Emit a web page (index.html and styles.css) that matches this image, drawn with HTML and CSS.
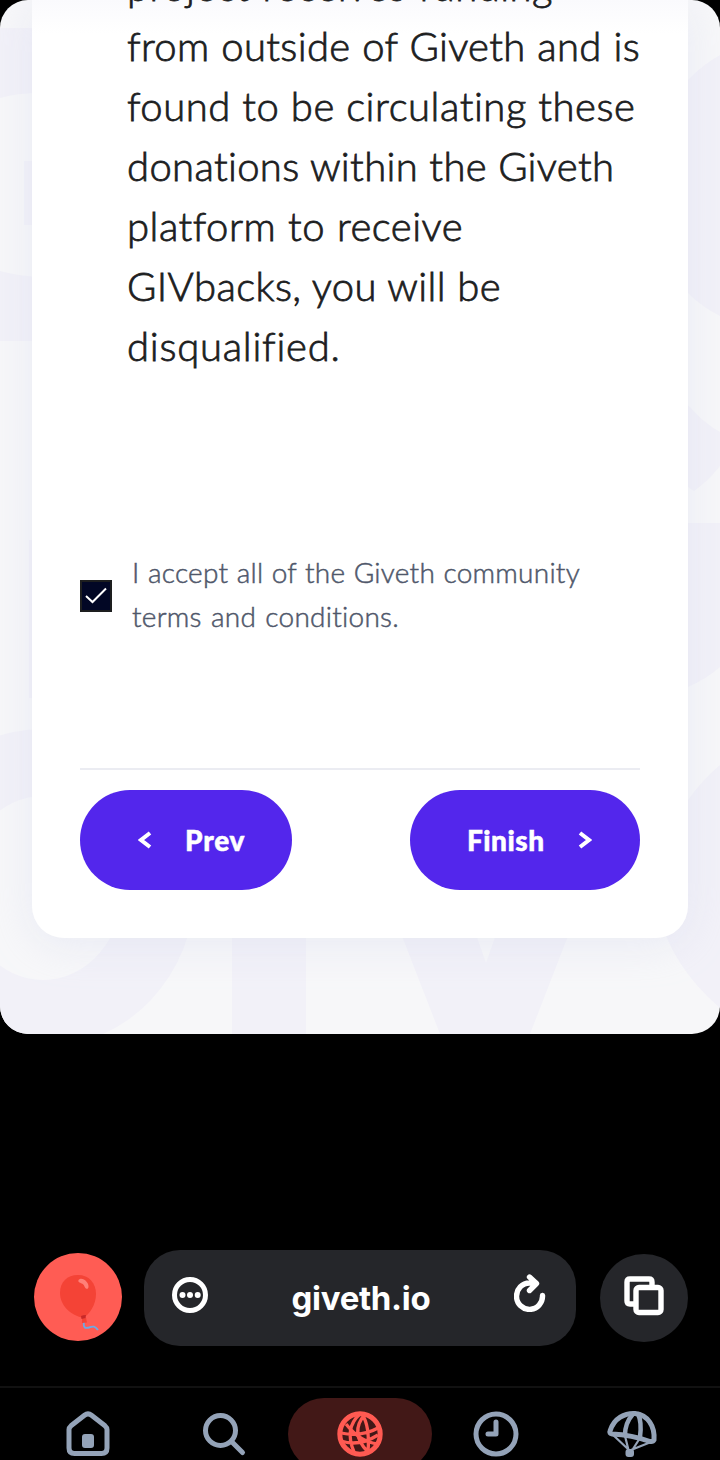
FILE: index.html
```html
<!DOCTYPE html>
<html lang="en">
<head>
<meta charset="utf-8">
<meta name="viewport" content="width=device-width">
<title>Giveth</title>
<link rel="stylesheet" href="styles.css">
</head>
<body>
<main class="page">
  <svg class="backdrop" viewBox="0 0 720 1034" aria-hidden="true">
    <path d="M0 28h40v65Q18 93 0 98zM24 161h16v64H24zM0 271q18 5 40 6v64H0zM29 540h10v158H29z"/>
    <path fill-rule="evenodd" d="M-109 888a152 159 0 0 1 304 0a152 159 0 0 1-304 0zM-37 888a80 92 0 0 0 160 0a80 92 0 0 0-160 0z"/>
    <path d="M232 900h74v134h-74zM388 900l52 134h90l52-134h-74l-22 63-22-63z"/>
    <path d="M720 55Q702 65 688 80h-20v213h20q14 14 32 23zM688 405q14 17 32 27v34q-12 15-26 25l-6-4zM688 523h32v144q-14 12-32 20zM720 765q-18 15-32 35l-30 110q12 55 62 98z"/>
  </svg>
  <section class="card">
    <div class="terms">
      <span class="line t0">project receives funding</span>
      <span class="line t1">from outside of Giveth and is</span>
      <span class="line t2">found to be circulating these</span>
      <span class="line t3">donations within the Giveth</span>
      <span class="line t4">platform to receive</span>
      <span class="line t5">GIVbacks, you will be</span>
      <span class="line t6">disqualified.</span>
    </div>
    <label class="accept">
      <span class="box"><svg width="28" height="28" viewBox="0 0 28 28"><path d="M4 14l6.500 6L24 6.500" fill="none" stroke="#fff" stroke-width="2"/></svg></span>
      <span class="accept-text">
        <span class="line a1">I accept all of the Giveth community</span>
        <span class="line a2">terms and conditions.</span>
      </span>
    </label>
    <div class="actions">
      <button class="btn prev"><svg width="14" height="18" viewBox="0 0 14 18"><path d="M12 2L3 9l9 7"/></svg><span class="prev-label">Prev</span></button>
      <button class="btn finish"><span class="finish-label">Finish</span><svg width="14" height="18" viewBox="0 0 14 18"><path d="M2 2l9 7-9 7"/></svg></button>
    </div>
  </section>
</main>
<div class="toolbar">
  <div class="avatar">
    <svg width="88" height="88" viewBox="0 0 88 88">
      <path d="M50 68c-1 7 1 7.500 5 6.500c4-1.500 6-1.500 9 2.500" fill="none" stroke="#6fa8e4" stroke-width="1.900"/>
      <path d="M44 22c11 0 18 8 18 19c0 11-7 21-13 24C36 62 26 52 26 40c0-11 7-18 18-18z" fill="#f44336"/>
      <path d="M48 65l4-.5 1 5-5 .5z" fill="#f44336"/><path d="M47 63q2-1 5-1l-.5 3-4 1z" fill="#c62828"/>
      <path d="M46 26c4-1 9 4 8.500 8c-.5 3-3 2-4-.5c-1-3-3-3-5-4c-2-1-1-3 .5-3.500z" fill="#ff8078"/>
    </svg>
  </div>
  <div class="address">
    <svg width="36" height="36" viewBox="0 0 36 36"><circle cx="18" cy="18" r="15.500" fill="none" stroke="#fff" stroke-width="5"/><g fill="#fff"><circle cx="10.500" cy="18" r="3"/><circle cx="18" cy="18" r="3"/><circle cx="25.700" cy="18" r="3"/></g></svg>
    <span class="host">giveth.io</span>
    <svg class="reload" width="32" height="38" viewBox="0 0 32 38" fill="none" stroke="#fff" stroke-width="5.400" stroke-linecap="round" stroke-linejoin="round"><path d="M28.500 21.500A13 13.200 0 1 1 15.500 9H22M15.500 3l7 6.500-7 7"/></svg>
  </div>
  <div class="tabs">
    <svg width="40" height="40" viewBox="0 0 40 40" fill="none" stroke="#fff" stroke-width="5.400" stroke-linejoin="round"><path d="M10 28H6q-3 0-3-3V6q0-3 3-3h19q3 0 3 3v4"/><rect x="12" y="11.500" width="25" height="25" rx="3"/></svg>
  </div>
</div>
<nav class="nav">
  <div class="tab"><svg width="48" height="48" viewBox="0 0 48 48" fill="none" stroke="#94a3b8" stroke-width="5" stroke-linejoin="round"><path d="M5 19.500q0-2 2-3.700L20.500 5.200q3.500-2.700 7 0L41 15.800q2 1.700 2 3.700V38q0 5.500-5.500 5.500h-27Q5 43.500 5 38z"/><rect x="18" y="24" width="12" height="14" rx="3" fill="#94a3b8" stroke="none"/></svg></div>
  <div class="tab"><svg width="48" height="48" viewBox="0 0 48 48" fill="none" stroke="#94a3b8" stroke-width="5" stroke-linecap="round"><circle cx="20.500" cy="20.500" r="15"/><path d="M31.500 31.500L42.500 42.500"/></svg></div>
  <div class="tab active"><svg width="48" height="48" viewBox="0 0 48 48" fill="none" stroke="#ff5a52" stroke-width="4"><circle cx="24" cy="24" r="20.200" stroke-width="5"/><path d="M24 4Q8 18 18 42M29 4q-16 19 3 38M26 4q8 12 6 38M5 23q21 4 37-5M5 31q18 6 37-6M10 14q14 18 32 20" stroke-width="3.300"/></svg></div>
  <div class="tab"><svg width="48" height="48" viewBox="0 0 48 48" fill="none" stroke="#94a3b8" stroke-width="5" stroke-linecap="round" stroke-linejoin="round"><circle cx="24" cy="24" r="20"/><path d="M24 12v12h-8"/></svg></div>
  <div class="tab"><svg width="54" height="48" viewBox="0 0 54 48" fill="none" stroke="#94a3b8" stroke-width="5" stroke-linecap="round" stroke-linejoin="round"><path d="M5 21C9 8 20 3 30 3.500C43 5 50 16 49 30q-1 2-4 1.500Q27 25 7 24q-3-1-2-3z"/><path d="M28 4q-8 9-8 21M33 4q4 8 2 23" stroke-width="4.500"/><path d="M7 24l17 16M20 26l4 16M35 28l-9 14M46 32L26 40" stroke-width="2.200"/><rect x="20.500" y="39" width="8.500" height="8" rx="3" fill="#94a3b8" stroke="none"/></svg></div>
</nav>
</body>
</html>
```
FILE: styles.css
```css
* { box-sizing: border-box; }
html, body { margin: 0; height: 1460px; overflow: hidden; background: #000; }
body { display: flex; flex-direction: column; font-family: Lato, "Open Sans", sans-serif; }

.page {
  position: relative;
  flex: none;
  height: 1034px;
  padding: 0 32px;
  background: #f7f7f9;
  border-radius: 28px;
  overflow: hidden;
}
.backdrop { position: absolute; inset: 0; width: 720px; height: 1034px; fill: #f2f1f8; }
.card {
  position: relative;
  display: flow-root;
  height: 938px;
  padding: 0 48px;
  background: linear-gradient(#fafafd, #fff 34px);
  border-radius: 0 0 32px 32px;
  box-shadow: 0 6px 40px rgba(212, 218, 238, .4);
}
.line { display: block; white-space: nowrap; text-align-last: justify; }
.terms {
  margin-top: -44px;
  padding-left: 47px;
  color: #1d1e1f;
  font-size: 40px;
  font-weight: 300;
  line-height: 60px;
  -webkit-text-stroke: .8px #1d1e1f;
}
.t0 { width: 426px; letter-spacing: .5px; }
.t1 { width: 513px; letter-spacing: .35px; }
.t2 { width: 508px; letter-spacing: .55px; }
.t3 { width: 486px; letter-spacing: .35px; }
.t4 { width: 336px; letter-spacing: .5px; }
.t5 { width: 372px; letter-spacing: .4px; }
.t6 { width: 213px; letter-spacing: .75px; }

.accept { display: flex; align-items: center; gap: 20px; height: 88px; margin-top: 176px; }
.box { display: flex; width: 32px; height: 32px; border: 2px solid #1d1e1f; background: #020725; }
.accept-text {
  margin-top: -4px;
  color: #4f576a;
  font-size: 28px;
  font-weight: 300;
  line-height: 44px;
  -webkit-text-stroke: .5px #4f576a;
}
.a1 { width: 448px; letter-spacing: .25px; }
.a2 { width: 267px; letter-spacing: .25px; }

.actions {
  display: flex;
  justify-content: space-between;
  margin-top: 128px;
  padding-top: 20px;
  border-top: 2px solid #ebecf2;
}
.btn {
  display: flex;
  align-items: center;
  height: 100px;
  padding: 0;
  border: 0;
  border-radius: 50px;
  background: #5326ec;
  color: #fff;
  font: 900 28px/40px Lato, sans-serif;
  -webkit-text-stroke: .5px #fff;
}
.btn svg { flex: none; fill: none; stroke: #fff; stroke-width: 4; }
.prev { width: 212px; padding-left: 58px; gap: 33px; }
.finish { width: 230px; padding-left: 57px; gap: 32px; }
.prev-label { width: 62px; text-align: left; letter-spacing: .8px; margin-top: -1px; }
.finish-label { width: 79px; text-align: left; letter-spacing: .5px; margin-top: -1px; }

.toolbar { display: flex; align-items: center; height: 96px; margin: 216px 32px 0 34px; flex: none; }
.avatar { width: 88px; height: 88px; margin: -2px 22px 0 0; border-radius: 50%; background: #ff5c54; }
.address {
  display: flex;
  align-items: center;
  justify-content: space-between;
  width: 432px;
  height: 96px;
  padding: 0 30px 6px 28px;
  border-radius: 36px;
  background: #25262a;
}
.host { color: #fff; font: 700 33px/40px Inter, sans-serif; padding-top: 5px; letter-spacing: -.3px; }
.reload { margin-top: -4px; }
.tabs { display: flex; align-items: center; justify-content: center; width: 88px; height: 88px; margin-left: 24px; padding-bottom: 4px; border-radius: 50%; background: #25262a; }
.nav { display: flex; height: 74px; margin-top: 40px; padding: 0 20px; border-top: 2px solid #111; flex: none; }
.tab { display: flex; justify-content: center; width: 136px; padding-top: 22px; flex: none; }
.active { width: 144px; height: 72px; margin: 10px -4px 0; padding-top: 12px; border-radius: 36px; background: #421817; }
```
